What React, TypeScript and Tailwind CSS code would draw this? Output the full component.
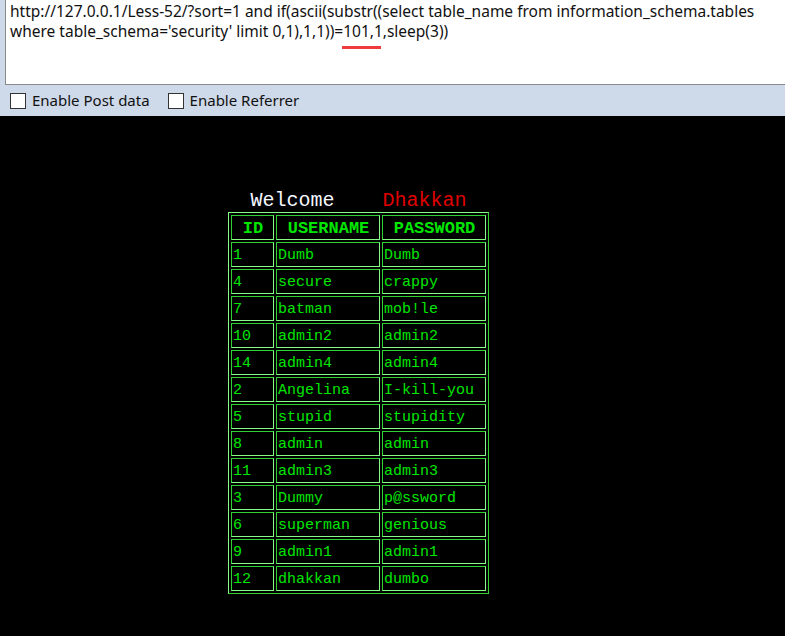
import React from "react";

const rows: [string, string, string][] = [
  ["1", "Dumb", "Dumb"],
  ["4", "secure", "crappy"],
  ["7", "batman", "mob!le"],
  ["10", "admin2", "admin2"],
  ["14", "admin4", "admin4"],
  ["2", "Angelina", "I-kill-you"],
  ["5", "stupid", "stupidity"],
  ["8", "admin", "admin"],
  ["11", "admin3", "admin3"],
  ["3", "Dummy", "p@ssword"],
  ["6", "superman", "genious"],
  ["9", "admin1", "admin1"],
  ["12", "dhakkan", "dumbo"],
];

const cell =
  "h-[25px] p-0 pt-[2px] pl-[1px] leading-[20px] align-middle border border-t-[#2fd22f] border-l-[#2fd22f] border-r-[#86fb86] border-b-[#86fb86]";

function Checkbox({ label }: { label: string }) {
  return (
    <label className="flex items-center gap-[6px]">
      <span className="w-4 h-4 bg-white border border-[#333333]" />
      <span>{label}</span>
    </label>
  );
}

export default function App() {
  return (
    <div className="min-h-screen w-full bg-black flex flex-col">
      <div className="bg-[#ced9e9] pl-[5px]">
        <div className="relative h-[85px] bg-white border-l border-b border-[#8a8a8a] pl-[4px] pt-[1px] text-[15.5px] leading-[20px] text-[#111] font-['Noto_Sans',sans-serif]">
          <div className="whitespace-nowrap">
            http://127.0.0.1/Less-52/?sort=1 and if(ascii(substr((select table_name from information_schema.tables
          </div>
          <div className="whitespace-nowrap">
            where table_schema='security' limit 0,1),1,1))=101,1,sleep(3))
          </div>
          <div className="absolute left-[336px] top-[46px] w-[39px] h-[3px] bg-[#ef3b3b]" />
        </div>
      </div>
      <div className="h-[31px] bg-[#ced9e9] flex items-center gap-[18px] pl-[10px] text-[15px] text-[#111] font-['Noto_Sans',sans-serif]">
        <Checkbox label="Enable Post data" />
        <Checkbox label="Enable Referrer" />
      </div>

      <div className="ml-[228px] mt-[74px] w-[261px] font-['Liberation_Mono',monospace]">
        <div className="h-[22px] leading-[22px] text-[20px] text-center whitespace-pre">
          <span className="text-[#f4f6ff]">Welcome</span>
          <span>    </span>
          <span className="text-[#e00000]">Dhakkan</span>
        </div>
        <table className="border-separate border-spacing-[2px] border border-t-[#86fb86] border-l-[#86fb86] border-r-[#2fd22f] border-b-[#2fd22f] text-[#00e600] text-[15px]">
          <thead>
            <tr>
              <th className={`${cell} w-[43px] text-center font-bold text-[17px]`}>ID</th>
              <th className={`${cell} w-[104px] text-center font-bold text-[17px]`}>USERNAME</th>
              <th className={`${cell} w-[104px] text-center font-bold text-[17px]`}>PASSWORD</th>
            </tr>
          </thead>
          <tbody>
            {rows.map((r) => (
              <tr key={r[0]}>
                <td className={cell}>{r[0]}</td>
                <td className={cell}>{r[1]}</td>
                <td className={cell}>{r[2]}</td>
              </tr>
            ))}
          </tbody>
        </table>
      </div>
    </div>
  );
}
